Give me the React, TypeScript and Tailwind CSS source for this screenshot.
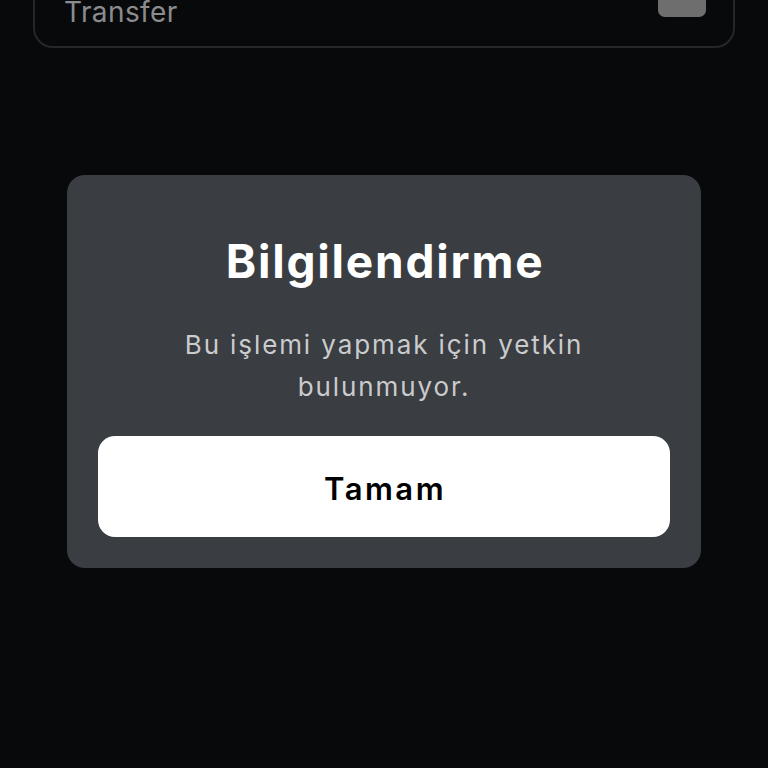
export default function App() {
  return (
    <div className="w-[768px] h-[768px] bg-[#08090b] overflow-hidden flex flex-col" style={{ fontFamily: 'Inter, "Noto Sans", sans-serif' }}>
      <div className="mx-[33px] mt-[-50px] h-[98px] rounded-[20px] border-2 border-[#25272a] flex items-end justify-between pl-[29px] pr-[27px] pb-[18px]">
        <span className="text-[28px] leading-[32px] text-[#8b8c8e] tracking-[0.4px]">Transfer</span>
        <div className="w-[48px] h-[44px] mb-[11px] rounded-[7px] bg-[#6e6e6e]" />
      </div>
      <div className="mt-[127px] mx-[67px] h-[393px] rounded-[18px] bg-[#3a3d41] flex flex-col items-center px-[31px] pt-[58px]">
        <h1 className="text-[46px] leading-[56px] font-bold text-white tracking-[1.8px] pl-[2px]">Bilgilendirme</h1>
        <p className="mt-[35px] text-[26px] leading-[42px] text-[#cacbcd] text-center w-[500px] tracking-[1.9px]">
          Bu işlemi yapmak için yetkin bulunmuyor.
        </p>
        <button className="mt-[28px] w-full h-[101px] rounded-[17px] bg-white text-black text-[31px] font-semibold tracking-[2.5px] pl-[2px] pt-[5px] flex items-center justify-center">
          Tamam
        </button>
      </div>
    </div>
  );
}
